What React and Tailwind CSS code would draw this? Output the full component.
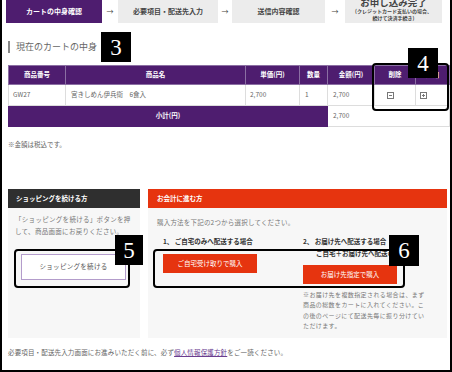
import React from "react";

const jp = { fontFamily: '"Noto Sans CJK JP", "Noto Sans", sans-serif' };

function Badge({ n, className }) {
  return (
    <div
      className={`absolute flex items-center justify-center bg-black text-white text-[23px] leading-none ${className}`}
      style={{ fontFamily: '"Liberation Serif", serif' }}
    >
      {n}
    </div>
  );
}

function MinusBox() {
  return (
    <svg width="7" height="7" viewBox="0 0 7 7">
      <rect x="0.5" y="0.5" width="6" height="6" fill="none" stroke="#777" />
      <path d="M2 3.5h3" stroke="#777" />
    </svg>
  );
}

function PlusBox() {
  return (
    <svg width="7" height="7" viewBox="0 0 7 7">
      <rect x="0.5" y="0.5" width="6" height="6" fill="none" stroke="#777" />
      <path d="M2 3.5h3M3.5 2v3" stroke="#777" />
    </svg>
  );
}

const steps = [
  { label: "カートの中身確認", w: "w-[96px]", active: true },
  { label: "必要項目・配送先入力", w: "w-[100px]" },
  { label: "送信内容確認", w: "w-[93px]" },
];

export default function App() {
  return (
    <div
      className="relative w-[452px] h-[372px] overflow-hidden bg-white border-x-2 border-b-2 border-black text-[#555]"
      style={jp}
    >
      <div className="pl-[4px]">
        {/* steps */}
        <div className="flex items-center h-[23px]">
          {steps.map((s, i) => (
            <React.Fragment key={s.label}>
              <div
                className={`${s.w} h-[23px] flex items-center justify-center text-[7px] font-bold ${
                  s.active ? "bg-[#4e1d6f] text-white" : "bg-[#ececec] text-[#444]"
                }`}
              >
                {s.label}
              </div>
              <div className={`${i === 0 ? "w-[16px]" : i === 1 ? "w-[14px]" : "w-[20px]"} text-center text-[7px] text-[#444]`}>
                →
              </div>
            </React.Fragment>
          ))}
          <div className="w-[97px] h-[23px] bg-[#ececec] flex flex-col items-center justify-start text-[#444] font-bold">
            <div className="-mt-[3px] text-[9.5px] leading-[10px]">お申し込み完了</div>
            <div className="mt-[1px] text-[5px] leading-[6.5px]">(クレジットカード支払いの場合、</div>
            <div className="text-[5px] leading-[6.5px]">続けて決済手続き)</div>
          </div>
        </div>

        {/* heading */}
        <div className="mt-[17px] ml-[2px] flex items-center h-[13px]">
          <div className="w-[2px] h-[12px] bg-[#888]" />
          <div className="ml-[6px] text-[9px] leading-[13px] text-[#666]">現在のカートの中身</div>
        </div>

        {/* table */}
        <table className="mt-[12px] ml-[2px] w-[441px] table-fixed border-collapse text-[6.5px]">
          <colgroup>
            <col className="w-[57px]" />
            <col className="w-[180px]" />
            <col className="w-[54px]" />
            <col className="w-[28px]" />
            <col className="w-[47px]" />
            <col className="w-[41px]" />
            <col className="w-[34px]" />
          </colgroup>
          <thead>
            <tr className="h-[19px] bg-[#4e1d6f] text-white font-bold">
              {["商品番号", "商品名", "単価(円)", "数量", "金額(円)", "削除", "追加"].map((h) => (
                <th key={h} className="border border-[#8b6fa3] font-bold text-center p-0">
                  {h}
                </th>
              ))}
            </tr>
          </thead>
          <tbody>
            <tr className="h-[21px] text-[#666]">
              <td className="border border-[#ddd] pl-[4px]">GW27</td>
              <td className="border border-[#ddd] pl-[5px]">宮きしめん伊兵衛　6食入</td>
              <td className="border border-[#ddd] pl-[4px]">2,700</td>
              <td className="border border-[#ddd] pl-[5px]">1</td>
              <td className="border border-[#ddd] pl-[5px]">2,700</td>
              <td className="border border-[#ddd] pl-[12px]">
                <div className="flex"><MinusBox /></div>
              </td>
              <td className="border border-[#ddd] pl-[4px]">
                <div className="flex"><PlusBox /></div>
              </td>
            </tr>
            <tr className="h-[21px]">
              <td colSpan={4} className="bg-[#4e1d6f] text-white font-bold text-center border border-[#4e1d6f]">
                小計(円)
              </td>
              <td colSpan={3} className="border border-[#ddd] pl-[5px] text-[#666]">2,700</td>
            </tr>
          </tbody>
        </table>

        <div className="mt-[12px] ml-[2px] text-[6.5px] leading-[10px] text-[#666]">※金額は税込です。</div>

        {/* panels */}
        <div className="mt-[40px] ml-[2px] flex gap-[8px] h-[149px]">
          <div className="w-[132px] bg-[#f7f7f7]">
            <div className="h-[19px] bg-[#2f2f2f] text-white font-bold text-[6.5px] flex items-center pl-[8px]">
              ショッピングを続ける方
            </div>
            <div className="px-[7px] pt-[5px] text-[6.5px] leading-[12px] tracking-[0.3px] text-[#777]">
              「ショッピングを続ける」ボタンを押して、商品画面にお戻りください。
            </div>
            <div className="mt-[17px] ml-[13px] w-[105px] h-[26px] bg-white border border-[#b39ccb] flex items-center justify-center text-[6.5px] text-[#555] tracking-[0.3px]">
              ショッピングを続ける
            </div>
          </div>

          <div className="w-[299px] bg-[#f7f7f7]">
            <div className="h-[19px] bg-[#e6340f] text-white font-bold text-[6.5px] flex items-center pl-[9px]">
              お会計に進む方
            </div>
            <div className="px-[9px] pt-[9px] text-[6.5px] leading-[10px] tracking-[0.2px] text-[#777]">
              購入方法を下記の2つから選択してください。
            </div>
            <div className="mt-[9px] flex pl-[15px]">
              <div className="w-[140px]">
                <div className="text-[6.5px] leading-[10px] font-bold text-[#333]">1、 ご自宅のみへ配送する場合</div>
                <div className="mt-[8px] w-[94px] h-[19px] bg-[#e6340f] text-white text-[6.5px] flex items-center justify-center">
                  ご自宅受け取りで購入
                </div>
              </div>
              <div className="w-[128px]">
                <div className="text-[6.5px] leading-[10px] font-bold text-[#333]">2、 お届け先へ配送する場合</div>
                <div className="mt-[2px] pl-[13px] text-[6.5px] leading-[10px] font-bold text-[#333]">ご自宅＋お届け先へ配送可</div>
                <div className="mt-[7px] w-[94px] h-[19px] bg-[#e6340f] text-white text-[6.5px] flex items-center justify-center">
                  お届け先指定で購入
                </div>
                <div className="mt-[6px] w-[124px] text-[6px] leading-[10.4px] tracking-[0.4px] text-[#777]">
                  ※お届け先を複数指定される場合は、まず商品の総数をカートに入れてください。この後のページにて配送先毎に振り分けていただけます。
                </div>
              </div>
            </div>
          </div>
        </div>

        <div className="mt-[9px] ml-[2px] text-[6.5px] leading-[10px] tracking-[0.15px] text-[#666]">
          必要項目・配送先入力画面にお進みいただく前に、必ず
          <span className="text-[#6a3d8f] underline">個人情報保護方針</span>
          をご一読ください。
        </div>
      </div>

      {/* callouts */}
      <div className="absolute left-[370px] top-[63px] w-[77px] h-[48px] rounded-[4px] border-2 border-black" />
      <div className="absolute left-[12px] top-[249px] w-[116px] h-[39px] rounded-[4px] border-2 border-black" />
      <div className="absolute left-[151px] top-[249px] w-[252px] h-[39px] rounded-[4px] border-2 border-black" />
      <Badge n="3" className="left-[99px] top-[32px] w-[30px] h-[30px]" />
      <Badge n="4" className="left-[406px] top-[48px] w-[30px] h-[30px]" />
      <Badge n="5" className="left-[113px] top-[235px] w-[28px] h-[30px]" />
      <Badge n="6" className="left-[387px] top-[235px] w-[30px] h-[31px]" />
    </div>
  );
}
